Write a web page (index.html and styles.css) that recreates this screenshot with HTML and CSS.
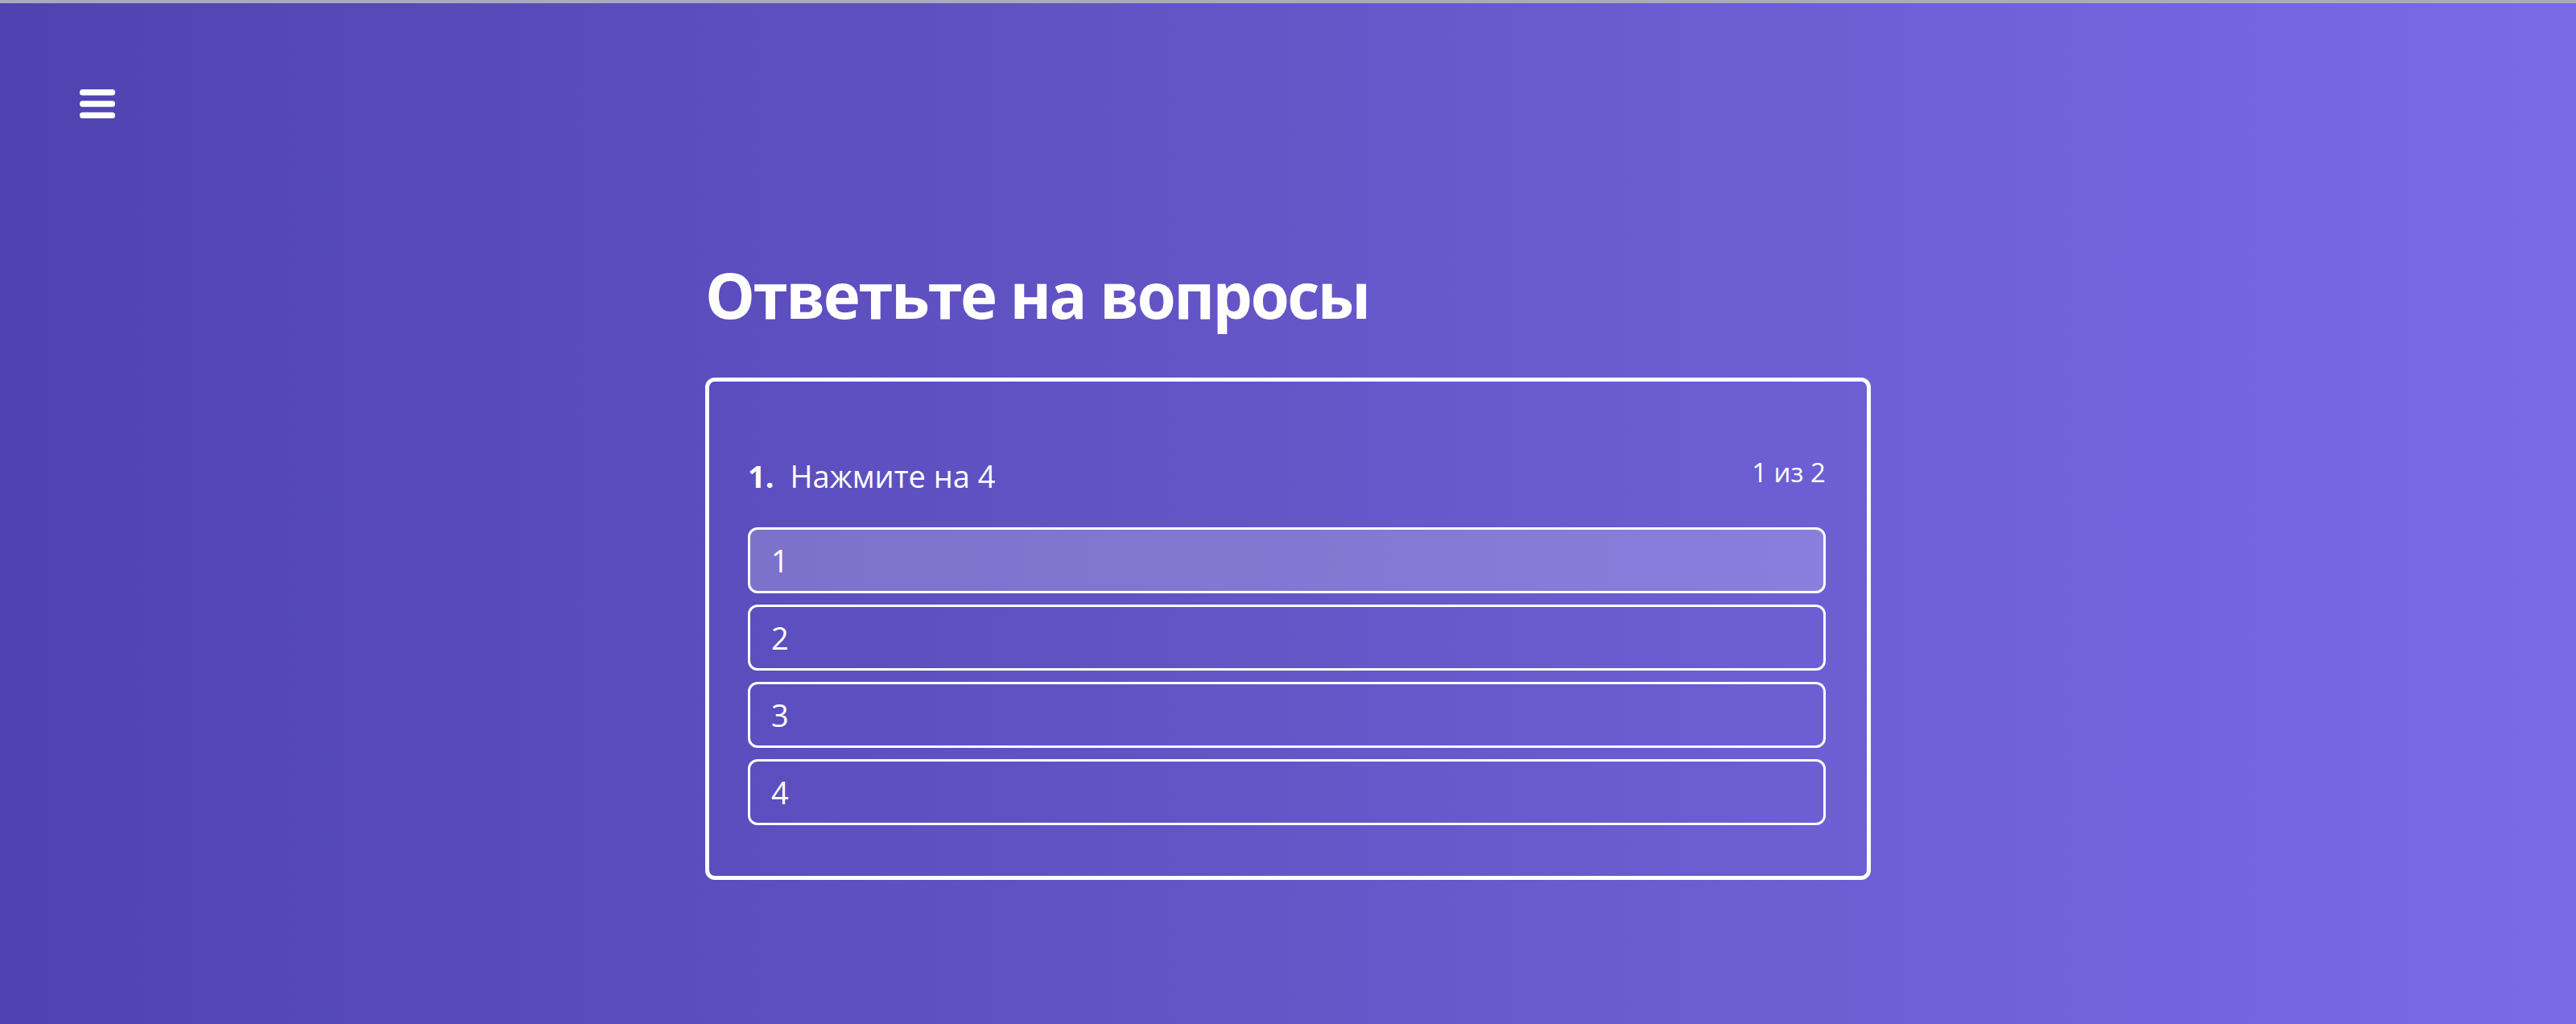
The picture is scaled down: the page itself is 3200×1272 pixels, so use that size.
FILE: index.html
```html
<!DOCTYPE html>
<html lang="ru">
<head>
<meta charset="utf-8">
<title>Ответьте на вопросы</title>
<link rel="stylesheet" href="styles.css">
</head>
<body>
<div class="page">
  <header class="topbar">
    <button class="menu-btn" aria-label="Меню">
      <svg width="44" height="36" viewBox="0 0 44 36"><rect x="0" y="0" width="44" height="7.5" rx="3.5" fill="#fff"/><rect x="0" y="14.2" width="44" height="7.5" rx="3.5" fill="#fff"/><rect x="0" y="28.5" width="44" height="7.5" rx="3.5" fill="#fff"/></svg>
    </button>
  </header>
  <main class="quiz">
    <h1 class="quiz-title">Ответьте на вопросы</h1>
    <section class="card">
      <div class="question-row">
        <div class="question"><span class="q-num">1.</span><span class="q-text">Нажмите на 4</span></div>
        <div class="counter">1 из 2</div>
      </div>
      <div class="options">
        <button class="option option-active">1</button>
        <button class="option">2</button>
        <button class="option">3</button>
        <button class="option">4</button>
      </div>
    </section>
  </main>
</div>
</body>
</html>
```

FILE: styles.css
```css
html, body {
  margin: 0;
  padding: 0;
  height: 100%;
}
body {
  font-family: "Open Sans", "Noto Sans", sans-serif;
  color: #fff;
  background: linear-gradient(90deg, #5043b1 0%, #6556c8 50%, #7a6ae6 100%);
  border-top: 4px solid #a9abb9;
  box-sizing: border-box;
  min-height: 100vh;
}
.page {
  display: flex;
  flex-direction: column;
}
.topbar {
  padding: 107px 0 0 99px;
  display: flex;
}
.menu-btn {
  background: none;
  border: 0;
  padding: 0;
  margin: 0;
  width: 44px;
  height: 36px;
  display: block;
  cursor: pointer;
}
.menu-btn svg { display: block; }
.quiz {
  width: 1448px;
  margin: 171px auto 0;
}
.quiz-title {
  margin: 0 0 55px;
  font-size: 78px;
  line-height: 96px;
  font-weight: 700;
  letter-spacing: -2.5px;
}
.card {
  border: 5px solid #fff;
  border-radius: 12px;
  padding: 87px 51px 63px 48px;
}
.question-row {
  display: flex;
  justify-content: space-between;
  align-items: flex-start;
}
.question {
  font-size: 38px;
  line-height: 60px;
}
.q-num {
  font-weight: 700;
  margin-right: 20px;
}
.counter {
  font-size: 33px;
  line-height: 51px;
}
.options {
  margin-top: 34px;
  display: flex;
  flex-direction: column;
  gap: 14px;
}
.option {
  display: block;
  width: 100%;
  height: 82px;
  box-sizing: border-box;
  border: 3px solid #fff;
  border-radius: 12px;
  background: transparent;
  color: #fff;
  font-family: inherit;
  font-size: 38px;
  text-align: left;
  padding: 0 26px;
  cursor: pointer;
}
.option-active {
  background: rgba(255, 255, 255, 0.2);
}
```
